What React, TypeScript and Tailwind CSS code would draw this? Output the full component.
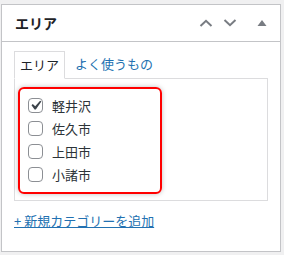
import React from "react";

const font = { fontFamily: '"Noto Sans CJK JP", "Noto Sans", sans-serif' };

const items = [
  { name: "軽井沢", checked: true },
  { name: "佐久市", checked: false },
  { name: "上田市", checked: false },
  { name: "小諸市", checked: false },
];

function Box({ checked }: { checked: boolean }) {
  return (
    <span className="w-[15px] h-[15px] border border-[#8c8f94] rounded-[4px] bg-white flex items-center justify-center shrink-0 overflow-visible">
      {checked && (
        <svg width="19" height="19" viewBox="0 0 20 20" className="shrink-0 -mt-px">
          <path d="M14.83 4.89l1.34.94-5.81 8.38H9.02L5.78 9.67l1.34-1.25 2.57 2.4z" fill="#3c434a" />
        </svg>
      )}
    </span>
  );
}

export default function App() {
  return (
    <div className="w-[284px] h-[255px] bg-[#f0f0f1] pt-1 pl-px" style={font}>
      <div className="w-[280px] h-[248px] bg-white border border-[#c3c4c7]">
        <div className="h-[37px] border-b border-[#c3c4c7] flex items-center pl-[13px] pr-3">
          <h2 className="text-[14px] font-semibold text-[#1d2327] flex-1">エリア</h2>
          <div className="flex items-center">
            <svg width="14" height="10" viewBox="0 0 14 10" className="mr-[10px] ml-px">
              <path d="M1.5 8L7 2.8 12.5 8" stroke="#787c82" strokeWidth="2" fill="none" />
            </svg>
            <svg width="14" height="10" viewBox="0 0 14 10" className="mr-[20px]">
              <path d="M1.5 2L7 7.2 12.5 2" stroke="#787c82" strokeWidth="2" fill="none" />
            </svg>
            <svg width="10" height="8" viewBox="0 0 10 8" className="mr-px">
              <path d="M5 1L9.5 7H0.5z" fill="#787c82" />
            </svg>
          </div>
        </div>
        <div className="pl-[12px] pr-3 pt-[8px]">
          <div className="flex items-end text-[13px]">
            <div className="h-[28px] px-[5px] border border-[#dcdcde] border-b-white bg-white text-[#1d2327] flex items-center -mb-px relative z-10">
              エリア
            </div>
            <div className="h-[28px] px-[10px] text-[#2271b1] flex items-center">よく使うもの</div>
          </div>
          <div className="w-[254px] h-[123px] border border-[#dcdcde] pt-[8px] pl-[3px]">
            <div className="w-[144px] h-[107px] border-2 border-[#ff0000] rounded-[6px] shadow-[0_0_5px_rgba(0,0,0,0.25)] pl-[8px] pt-[9px] flex flex-col gap-[8px]">
              {items.map((it) => (
                <label key={it.name} className="flex items-center h-[15px] leading-4 text-[13px] text-[#2c3338]">
                  <Box checked={it.checked} />
                  <span className="ml-[9px]">{it.name}</span>
                </label>
              ))}
            </div>
          </div>
          <a className="block mt-[10px] text-[13px] text-[#2271b1] underline" href="#">
            + 新規カテゴリーを追加
          </a>
        </div>
      </div>
    </div>
  );
}
